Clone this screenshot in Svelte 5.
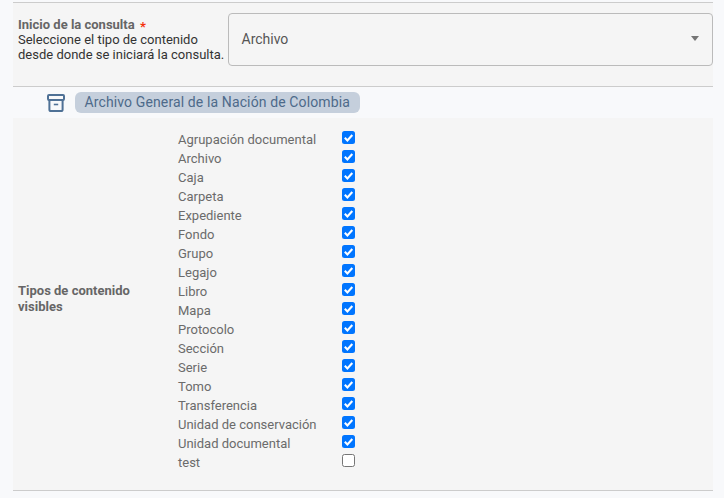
<script lang="ts">
  const tipos = [
    { name: "Agrupación documental", on: true },
    { name: "Archivo", on: true },
    { name: "Caja", on: true },
    { name: "Carpeta", on: true },
    { name: "Expediente", on: true },
    { name: "Fondo", on: true },
    { name: "Grupo", on: true },
    { name: "Legajo", on: true },
    { name: "Libro", on: true },
    { name: "Mapa", on: true },
    { name: "Protocolo", on: true },
    { name: "Sección", on: true },
    { name: "Serie", on: true },
    { name: "Tomo", on: true },
    { name: "Transferencia", on: true },
    { name: "Unidad de conservación", on: true },
    { name: "Unidad documental", on: true },
    { name: "test", on: false },
  ]
</script>

<div class="page">
  <div class="sheet">
    <section class="inicio">
      <div class="inicio__label">
        <div class="inicio__title">Inicio de la consulta <span class="req">*</span></div>
        <div class="inicio__help">Seleccione el tipo de contenido<br />desde donde se iniciará la consulta.</div>
      </div>
      <div class="select">
        <span>Archivo</span>
        <span class="select__arrow"></span>
      </div>
    </section>

    <div class="repo">
      <svg class="repo__icon" width="18" height="18" viewBox="0 0 18 18" fill="none" stroke="#4f7196" stroke-width="2" aria-hidden="true">
        <rect x="1" y="1" width="16" height="5" rx="1" />
        <path d="M2.4 6v9.4a1.6 1.6 0 0 0 1.6 1.6h10a1.6 1.6 0 0 0 1.6-1.6V6" />
        <path d="M6.8 10.5h4.4" stroke-width="1.6" />
      </svg>
      <span class="repo__tag">Archivo General de la Nación de Colombia</span>
    </div>

    <section class="tipos">
      <div class="tipos__label">Tipos de contenido<br />visibles</div>
      <ul class="tipos__list">
        {#each tipos as tipo (tipo.name)}
          <li class="tipo">
            <span class="tipo__name">{tipo.name}</span>
            <span class="check" class:check--on={tipo.on}>
              {#if tipo.on}
                <svg width="13" height="13" viewBox="0 0 13 13" fill="none" stroke="#fff" stroke-width="2.1" aria-hidden="true">
                  <path d="M2.8 6.8l2.6 2.6 4.9-5.4" />
                </svg>
              {/if}
            </span>
          </li>
        {/each}
      </ul>
    </section>
  </div>
</div>

<style>
  :global(body) {
    margin: 0;
    background: #fff;
  }

  .page {
    height: 498px;
    padding-left: 3px;
    background: #f8f9fb;
    font-family: Roboto, "Liberation Sans", sans-serif;
    font-size: 13px;
    box-sizing: border-box;
    overflow: hidden;
  }

  .sheet {
    width: 700px;
    margin-left: 10px;
    padding-top: 2px;
  }

  .inicio {
    display: flex;
    height: 85px;
    padding: 10px 0 0 5px;
    box-sizing: border-box;
    gap: 4px;
    background: #f5f5f5;
    border-top: 1px solid #ccc;
    border-bottom: 1px solid #ccc;
  }

  .inicio__label {
    width: 206px;
    padding-top: 4px;
    line-height: 15.5px;
    color: #333;
    white-space: nowrap;
  }

  .inicio__title {
    height: 14.5px;
    font-weight: 700;
    color: #666;
  }

  .req {
    margin-left: 2px;
    font-weight: 700;
    font-size: 13px;
    line-height: 13px;
    vertical-align: -2px;
    color: #f4320c;
  }

  .select {
    flex: 1;
    height: 53px;
    padding: 0 13px 2px 12.5px;
    box-sizing: border-box;
    display: flex;
    align-items: center;
    justify-content: space-between;
    border: 1px solid #bbb;
    border-radius: 4px;
    font-size: 14px;
    color: #555;
  }

  .select__arrow {
    width: 0;
    height: 0;
    border-left: 4.5px solid transparent;
    border-right: 4.5px solid transparent;
    border-top: 5px solid #757575;
  }

  .repo {
    display: flex;
    align-items: center;
    height: 31px;
    padding: 0 0 0 34px;
    box-sizing: border-box;
  }

  .repo__icon {
    margin-right: 10px;
  }

  .repo__tag {
    height: 21px;
    line-height: 21px;
    padding: 0 10.5px 0 9.5px;
    border-radius: 6px;
    background: #c5cfdc;
    color: #4d6a8a;
    font-size: 14px;
    letter-spacing: 0.12px;
    white-space: nowrap;
  }

  .tipos {
    display: flex;
    align-items: center;
    height: 373px;
    padding-bottom: 7px;
    box-sizing: border-box;
    background: #f5f5f5;
    border-bottom: 1px solid #ccc;
  }

  .tipos__label {
    width: 165px;
    margin-bottom: 4px;
    padding-left: 5px;
    box-sizing: border-box;
    font-weight: 700;
    line-height: 16px;
    color: #666;
  }

  .tipos__list {
    list-style: none;
    margin: 0;
    padding: 0;
  }

  .tipo {
    display: flex;
    align-items: center;
    height: 19px;
    color: #6b6b6b;
  }

  .tipo__name {
    width: 164px;
    white-space: nowrap;
  }

  .check {
    display: flex;
    width: 13px;
    height: 13px;
    margin-top: -3px;
    box-sizing: border-box;
    border: 1px solid #767676;
    border-radius: 2.5px;
    background: #fff;
  }

  .check--on {
    background: #0075ff;
    border: 0;
  }
</style>
